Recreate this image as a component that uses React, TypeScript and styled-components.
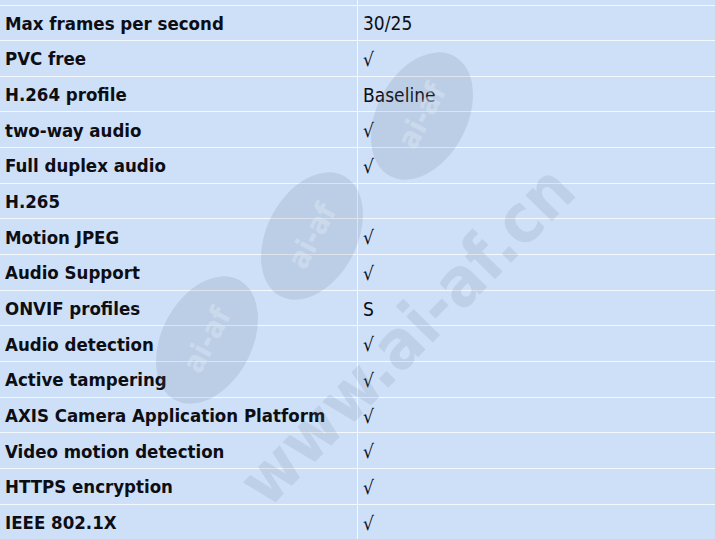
import styled, { createGlobalStyle } from 'styled-components'

const rows: [string, string][] = [
  ['Max frames per second', '30/25'],
  ['PVC free', '√'],
  ['H.264 profile', 'Baseline'],
  ['two-way audio', '√'],
  ['Full duplex audio', '√'],
  ['H.265', ''],
  ['Motion JPEG', '√'],
  ['Audio Support', '√'],
  ['ONVIF profiles', 'S'],
  ['Audio detection', '√'],
  ['Active tampering', '√'],
  ['AXIS Camera Application Platform', '√'],
  ['Video motion detection', '√'],
  ['HTTPS encryption', '√'],
  ['IEEE 802.1X', '√'],
]

const GlobalStyle = createGlobalStyle`
  html, body {
    margin: 0;
    padding: 0;
    background: #cde0f7;
    overflow: hidden;
  }
`

const Page = styled.div`
  position: relative;
  width: 715px;
  height: 539px;
  overflow: hidden;
  background: #cde0f7;
  font-family: 'DejaVu Sans Condensed', 'DejaVu Sans', sans-serif;
  font-stretch: condensed;
  color: #0d0d14;
`

const Table = styled.div`
  display: grid;
  grid-template-columns: 358px 1fr;
`

const Cell = styled.div<{ $head?: boolean; $stub?: boolean }>`
  box-sizing: border-box;
  height: ${(p) => (p.$stub ? '5.5px' : '35.67px')};
  border-bottom: 1.5px solid #f4f8ff;
  border-right: ${(p) => (p.$head ? '1.5px solid #f4f8ff' : 'none')};
  display: flex;
  align-items: center;
  padding: 1px 0 0 5px;
  font-size: ${(p) => (p.$head ? '18.5px' : '19px')};
  font-weight: ${(p) => (p.$head ? 700 : 400)};
  white-space: nowrap;
`

const Watermark = styled.svg`
  position: absolute;
  left: 0;
  top: 0;
  pointer-events: none;
`

const Badge = ({ x, y }: { x: number; y: number }) => (
  <g transform={`translate(${x} ${y}) rotate(-62)`}>
    <ellipse rx="68" ry="45" fill="rgba(95,110,135,0.15)" />
    <text
      x="0"
      y="10"
      textAnchor="middle"
      fontFamily="'DejaVu Sans', sans-serif"
      fontWeight="700"
      fontSize="30"
      fill="rgba(225,235,248,0.42)"
    >
      ai-af
    </text>
  </g>
)

export default function App() {
  return (
    <Page>
      <GlobalStyle />
      <Table>
        <Cell $head $stub />
        <Cell $stub />
        {rows.map(([k, v]) => [
          <Cell key={k + 'k'} $head>
            {k}
          </Cell>,
          <Cell key={k + 'v'}>{v}</Cell>,
        ])}
      </Table>
      <Watermark width="715" height="539" viewBox="0 0 715 539">
        <Badge x={422} y={116} />
        <Badge x={312} y={236} />
        <Badge x={207} y={340} />
        <text
          transform="translate(268 510) rotate(-45.5)"
          fontFamily="'DejaVu Sans', sans-serif"
          fontWeight="700"
          fontSize="68"
          fill="rgba(110,120,140,0.15)"
        >
          www.ai-af.cn
        </text>
      </Watermark>
    </Page>
  )
}
